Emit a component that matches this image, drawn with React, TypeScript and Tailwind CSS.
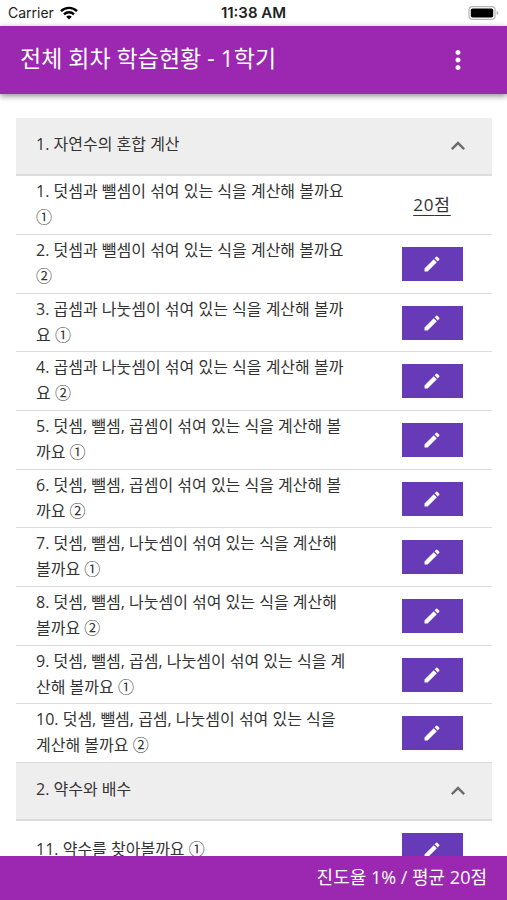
import { useState } from 'react';
import { MdCreate, MdExpandLess, MdExpandMore, MdMoreVert } from 'react-icons/md';

interface Lesson {
  title: string;
  score?: number;
}

interface Unit {
  title: string;
  lessons: Lesson[];
}

const UNITS: Unit[] = [
  {
    title: '1. 자연수의 혼합 계산',
    lessons: [
      { title: '1. 덧셈과 뺄셈이 섞여 있는 식을 계산해 볼까요 ①', score: 20 },
      { title: '2. 덧셈과 뺄셈이 섞여 있는 식을 계산해 볼까요 ②' },
      { title: '3. 곱셈과 나눗셈이 섞여 있는 식을 계산해 볼까요 ①' },
      { title: '4. 곱셈과 나눗셈이 섞여 있는 식을 계산해 볼까요 ②' },
      { title: '5. 덧셈, 뺄셈, 곱셈이 섞여 있는 식을 계산해 볼까요 ①' },
      { title: '6. 덧셈, 뺄셈, 곱셈이 섞여 있는 식을 계산해 볼까요 ②' },
      { title: '7. 덧셈, 뺄셈, 나눗셈이 섞여 있는 식을 계산해 볼까요 ①' },
      { title: '8. 덧셈, 뺄셈, 나눗셈이 섞여 있는 식을 계산해 볼까요 ②' },
      { title: '9. 덧셈, 뺄셈, 곱셈, 나눗셈이 섞여 있는 식을 계산해 볼까요 ①' },
      { title: '10. 덧셈, 뺄셈, 곱셈, 나눗셈이 섞여 있는 식을 계산해 볼까요 ②' },
    ],
  },
  {
    title: '2. 약수와 배수',
    lessons: [{ title: '11. 약수를 찾아볼까요 ①' }],
  },
];

function StatusBar() {
  return (
    <div className="grid h-[26px] shrink-0 grid-cols-3 items-center bg-white px-2 font-['Inter','Liberation_Sans',sans-serif] text-sm text-[#222]">
      <div className="flex items-center gap-1.5">
        Carrier
        <svg viewBox="0 0 18 14" className="h-3.5 w-[18px]" fill="none" stroke="#000" strokeWidth="2.4">
          <path d="M1 5.2a11.4 11.4 0 0 1 16 0" />
          <path d="M4 8.3a7.2 7.2 0 0 1 10 0" />
          <path d="M9 13.6 6.2 10.8a4 4 0 0 1 5.6 0z" fill="#000" stroke="none" />
        </svg>
      </div>
      <div className="text-center text-[15px] font-semibold">11:38 AM</div>
      <div className="flex justify-end">
        <svg viewBox="0 0 31 14" className="h-3.5 w-[31px]">
          <rect x="1" y="0.7" width="26" height="12.6" rx="3.4" fill="#fff" stroke="#b5b5b5" strokeWidth="1.2" />
          <rect x="2.8" y="2.5" width="22.4" height="9" rx="1.8" fill="#000" />
          <path d="M28.6 4.8c2.4.8 2.4 3.6 0 4.4z" fill="#b5b5b5" />
        </svg>
      </div>
    </div>
  );
}

function LessonRow({ lesson }: { lesson: Lesson }) {
  return (
    <li className="flex min-h-[59px] items-center border-b border-[#dcdcdc] pl-5 nth-[3n]:min-h-[58px]">
      <p className="flex-1 pb-0.5 text-base leading-[26px]">{lesson.title}</p>
      <div className="flex w-36 shrink-0 justify-center pl-6">
        {lesson.score !== undefined ? (
          <a href="#score" className="text-[17px] tracking-wider underline underline-offset-4">
            {lesson.score}점
          </a>
        ) : (
          <button
            type="button"
            aria-label={`${lesson.title} 학습하기`}
            className="flex h-[34px] w-[61px] cursor-pointer items-center justify-center bg-[#673ab7] text-white"
          >
            <MdCreate className="h-5 w-5" />
          </button>
        )}
      </div>
    </li>
  );
}

function UnitPanel({ unit }: { unit: Unit }) {
  const [open, setOpen] = useState(true);
  const Arrow = open ? MdExpandLess : MdExpandMore;

  return (
    <section>
      <button
        type="button"
        aria-expanded={open}
        onClick={() => setOpen(!open)}
        className="flex h-[58px] w-full cursor-pointer items-center justify-between border-b-2 border-[#dcdcdc] bg-[#eee] px-5 text-left text-base"
      >
        <span className="pb-1">{unit.title}</span>
        <Arrow className="h-7 w-7 text-[#6b6b6b]" />
      </button>
      {open && (
        <ul>
          {unit.lessons.map((lesson) => (
            <LessonRow key={lesson.title} lesson={lesson} />
          ))}
        </ul>
      )}
    </section>
  );
}

export default function App() {
  return (
    <div className="flex h-screen flex-col bg-white font-['Open_Sans','Noto_Sans_CJK_KR',sans-serif] text-[#333]">
      <StatusBar />
      <header className="z-10 flex h-[68px] shrink-0 items-center justify-between bg-[#9c27b0] pr-[34px] pl-5 text-white shadow-[0_2px_6px_rgba(0,0,0,0.45)]">
        <h1 className="pb-1 text-[23px]">전체 회차 학습현황 - 1학기</h1>
        <button type="button" aria-label="메뉴" className="cursor-pointer">
          <MdMoreVert className="h-[30px] w-[30px]" />
        </button>
      </header>
      <main className="min-h-0 flex-1 overflow-y-auto pt-6 pr-[15px] pl-4 [scrollbar-width:none]">
        {UNITS.map((unit) => (
          <UnitPanel key={unit.title} unit={unit} />
        ))}
      </main>
      <footer className="flex h-11 shrink-0 items-center justify-end bg-[#9c27b0] px-5 pb-0.5 text-lg text-white">
        진도율 1% / 평균 20점
      </footer>
    </div>
  );
}
